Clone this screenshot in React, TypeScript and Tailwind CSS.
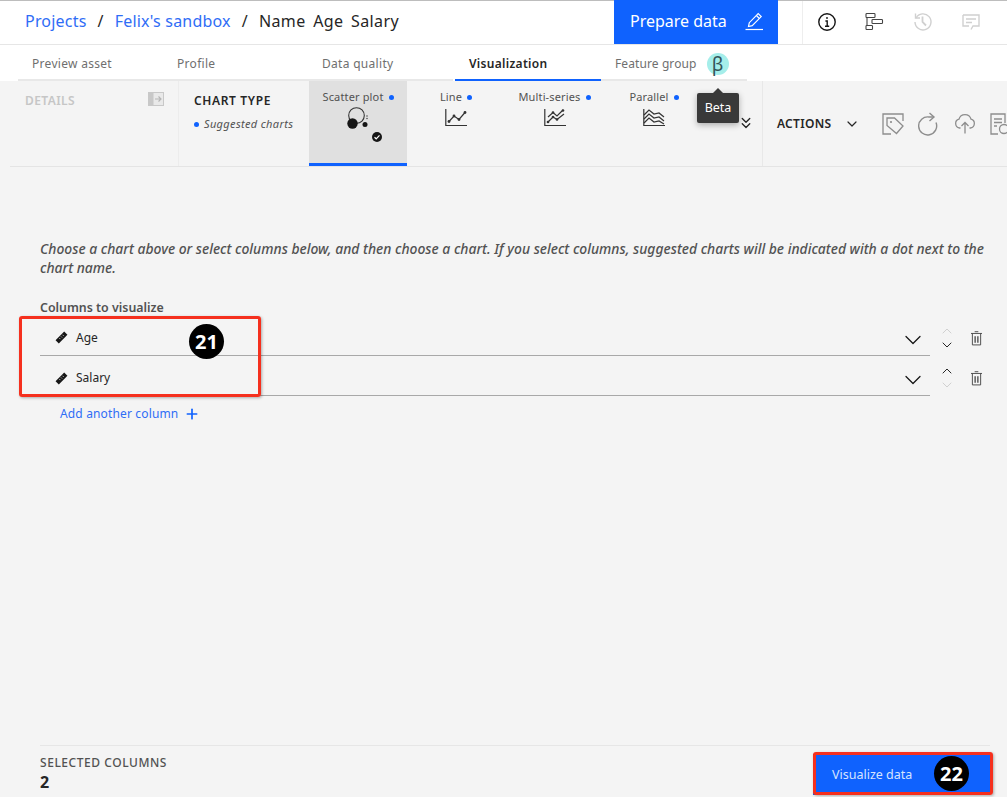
import React from 'react';
import {ChevronDown, ChevronUp, ChevronsDown, Plus} from 'lucide-react';

const font = {fontFamily: '"Noto Sans", "Open Sans", sans-serif'};

const tabs = ['Preview asset', 'Profile', 'Data quality'];

const InfoIcon = () => (
    <svg width="20" height="20" viewBox="0 0 20 20" fill="none" stroke="#161616" strokeWidth="1.4">
        <circle cx="10" cy="10" r="8.2"/>
        <path d="M8 14.2h4.2M10.2 14V9H8.4"/>
        <circle cx="10" cy="6" r=".9" fill="#161616" stroke="none"/>
    </svg>
);

const GanttIcon = () => (
    <svg width="20" height="20" viewBox="0 0 20 20" fill="none" stroke="#444" strokeWidth="1.1">
        <rect x="1" y="1.5" width="9" height="4" rx=".8"/>
        <rect x="7" y="7.5" width="10.5" height="4" rx=".8"/>
        <rect x="1" y="13.5" width="6.5" height="4" rx=".8"/>
        <path d="M2 5.5v8"/>
    </svg>
);

const HistoryIcon = () => (
    <svg width="20" height="20" viewBox="0 0 20 20" fill="none" stroke="#d0d0d0" strokeWidth="1.4">
        <path d="M2.5 1.5V6H7"/>
        <path d="M3 6a8 8 0 1 1-1 4"/>
        <path d="M9.5 4.5V10l3.5 3.5" strokeWidth="1.8"/>
    </svg>
);

const CommentIcon = () => (
    <svg width="20" height="20" viewBox="0 0 20 20" fill="none" stroke="#d0d0d0" strokeWidth="1.4">
        <path d="M2 3h16v11h-6l-2 3.5M8 14H2V3"/>
        <path d="M5 7h10M5 10.5h6"/>
    </svg>
);

const PencilIcon = () => (
    <svg width="20" height="20" viewBox="0 0 20 20" fill="none" stroke="white" strokeWidth="1.2">
        <path d="M1.5 18.5H19"/>
        <path d="M4.5 15.5l.8-3.8 8.900-9.100 3 3-9 9.100z"/>
        <path d="M12.4 4.5l3 3"/>
    </svg>
);

const SidePanelIcon = () => (
    <svg width="16" height="14" viewBox="0 0 16 14" fill="none">
        <rect x=".5" y=".5" width="15" height="13" fill="#e9e9e9" stroke="#c8c8c8"/>
        <rect x=".5" y=".5" width="5" height="13" fill="#c8c8c8"/>
        <path d="M7 7h6M10.5 4.5L13 7l-2.500 2.500" stroke="#b5b5b5" strokeWidth="1.2"/>
    </svg>
);

const ScatterIcon = () => (
    <svg width="24" height="26" viewBox="0 0 24 26" fill="none">
        <circle cx="10.5" cy="8.5" r="7.8" stroke="#333" strokeWidth="1.1"/>
        <circle cx="6.5" cy="16.5" r="5.2" fill="#161616"/>
        <circle cx="19" cy="17.5" r="2.5" fill="#161616"/>
        <circle cx="21" cy="9" r=".7" fill="#333"/>
        <circle cx="21" cy="11.5" r=".7" fill="#333"/>
    </svg>
);

const LineIcon = () => (
    <svg width="22" height="18" viewBox="0 0 22 18" fill="none" stroke="#333" strokeWidth="1.2">
        <path d="M.8 0v16.5H22"/>
        <path d="M4 12.5L9 7l5 3.500 6-7"/>
        <g fill="#333" stroke="none">
            <circle cx="4" cy="12.5" r="1.4"/>
            <circle cx="9" cy="7" r="1.4"/>
            <circle cx="14" cy="10.5" r="1.4"/>
            <circle cx="20" cy="3.5" r="1.4"/>
        </g>
    </svg>
);

const MultiSeriesIcon = () => (
    <svg width="22" height="18" viewBox="0 0 22 18" fill="none" stroke="#333" strokeWidth="1.2">
        <path d="M.8 0v16.5H22"/>
        <path d="M4 8l5-4.500 4 3.500 6-6"/>
        <path d="M4 13l5-5 4 2.500L20 5"/>
        <g fill="#333" stroke="none">
            <circle cx="4" cy="13" r="1.3"/>
            <circle cx="9" cy="8" r="1.3"/>
            <circle cx="13" cy="10.5" r="1.3"/>
            <circle cx="9" cy="3.5" r="1.3"/>
            <circle cx="19" cy="1.5" r="1.3"/>
        </g>
    </svg>
);

const ParallelIcon = () => (
    <svg width="22" height="18" viewBox="0 0 22 18" fill="none" stroke="#333" strokeWidth="1.2">
        <path d="M.8 0v16.5H22"/>
        <path d="M1 6l5-5 5 4 5-1 5 4"/>
        <path d="M1 10l5-5 5 4 5-1 5 4"/>
        <path d="M1 14l5-5 5 4 5-1 5 3"/>
    </svg>
);

const CheckBadge = () => (
    <svg width="10" height="10" viewBox="0 0 10 10">
        <circle cx="5" cy="5" r="5" fill="#161616"/>
        <path d="M2.5 5.2l1.700 1.600 3.300-3.400" fill="none" stroke="white" strokeWidth="1.2"/>
    </svg>
);

const TagIcon = () => (
    <svg width="22" height="22" viewBox="0 0 22 22" fill="none" stroke="#8d8d8d" strokeWidth="1.3">
        <path d="M9 21H1V1h20v7"/>
        <path d="M5 5h7.5l8.500 8-6.500 7.500L5 12.500z" fill="#f4f4f4"/>
        <circle cx="9" cy="9" r="1.1" fill="#8d8d8d" stroke="none"/>
    </svg>
);

const RefreshIcon = () => (
    <svg width="22" height="24" viewBox="0 0 22 24" fill="none" stroke="#8d8d8d" strokeWidth="1.4">
        <path d="M18 10.5A9 9 0 1 1 11 5h5"/>
        <path d="M11.5 1L16 5l-4.500 4"/>
    </svg>
);

const UploadIcon = () => (
    <svg width="22" height="22" viewBox="0 0 22 22" fill="none" stroke="#8d8d8d" strokeWidth="1.3">
        <path d="M6.5 15h-1A4.500 4.500 0 0 1 5 6.200a6.200 6.200 0 0 1 12 0 4.500 4.500 0 0 1-.5 8.800h-1"/>
        <path d="M11 20.5v-11M7.500 13L11 9.500l3.500 3.500"/>
    </svg>
);

const ReportIcon = () => (
    <svg width="20" height="22" viewBox="0 0 20 22" fill="none" stroke="#8d8d8d" strokeWidth="1.3">
        <path d="M8 21H1V1h14v9"/>
        <path d="M4 6h8M4 9.500h8M4 13h3"/>
        <circle cx="14" cy="16" r="4.5"/>
    </svg>
);

const RulerIcon = () => (
    <svg width="13" height="13" viewBox="0 0 12 12">
        <path d="M8.5 .5l3 3-8 8-3-3z" fill="#161616"/>
        <path d="M7 3.500l1 1M5.500 5l1 1M4 6.500l1 1" stroke="#f4f4f4" strokeWidth=".7"/>
    </svg>
);

const TrashIcon = () => (
    <svg width="11" height="15" viewBox="0 0 12 16" fill="none" stroke="#444" strokeWidth="1">
        <path d="M0 2.500h12M4 .6h4"/>
        <path d="M1.500 2.500V15h9V2.500"/>
        <path d="M4.500 5.500v7M7.500 5.500v7" strokeWidth="1.4"/>
    </svg>
);

const ChartOption = ({label, selected, widthClass, icon}: {
    label: string;
    selected?: boolean;
    widthClass: string;
    icon: React.ReactNode;
}) => (
    <div className={`${widthClass} flex-none flex flex-col items-center pt-[9px] ${selected ? 'bg-[#e0e0e0] border-b-[3px] border-[#0f62fe]' : ''}`}>
        <div className="flex items-center gap-[5px] text-[11px] leading-[14px] tracking-[.15px] text-[#525252]">
            {label}
            <span className="w-[5px] h-[5px] rounded-full bg-[#0f62fe]"/>
        </div>
        <div className={selected ? 'mt-[3px]' : 'mt-[5px]'}>{icon}</div>
    </div>
);

const ColumnRow = ({name, upEnabled, downEnabled, rowClass}: {
    name: string;
    upEnabled: boolean;
    downEnabled: boolean;
    rowClass: string;
}) => (
    <div className={`flex items-center ${rowClass}`}>
        <div className="w-[890px] h-full flex items-center border-b border-[#a8a8a8] pl-[15px] pr-[3px]">
            <RulerIcon/>
            <span className="ml-[8px] text-[12px] text-[#262626]">{name}</span>
            <ChevronDown className="ml-auto mt-[4px]" size={28} color="#161616" strokeWidth={1.1}/>
        </div>
        <div className="ml-[9px] flex flex-col items-center -mt-[1px]">
            <ChevronUp size={16} color={upEnabled ? '#262626' : '#d0d0d0'} strokeWidth={1.5}/>
            <ChevronDown size={16} className="-mt-[2px]" color={downEnabled ? '#262626' : '#d0d0d0'} strokeWidth={1.5}/>
        </div>
        <div className="ml-[16px]"><TrashIcon/></div>
    </div>
);

const App = () => {
    return (
        <div className="relative w-[1007px] h-[797px] overflow-hidden flex flex-col bg-[#f4f4f4]" style={font}>
            {/* top bar */}
            <header className="flex-none h-[45px] flex items-stretch bg-white border-t border-b border-t-[#bdbdbd] border-b-[#e6e6e6]">
                <div className="w-[614px] flex items-center pl-[25px] pb-[3px] gap-[11px] text-[16px] tracking-[.2px] text-[#262626] whitespace-nowrap">
                    <span className="text-[#2f6df6]">Projects</span>
                    <span>/</span>
                    <span className="text-[#2f6df6]">Felix's sandbox</span>
                    <span>/</span>
                    <span className="tracking-[.4px] [word-spacing:3px]">Name Age Salary</span>
                </div>
                <div className="w-[164px] flex items-center justify-between pl-[16px] pr-[14px] pb-[2px] bg-[#0f62fe] text-white text-[16px] -mt-px">
                    Prepare data
                    <PencilIcon/>
                </div>
                <div className="ml-[24px] flex-1 flex items-center pl-[14px] pb-[1px] gap-[28px] border-l border-[#eeeeee]">
                    <InfoIcon/>
                    <GanttIcon/>
                    <HistoryIcon/>
                    <CommentIcon/>
                </div>
            </header>

            {/* tabs */}
            <nav className="flex-none h-[36px] flex items-stretch bg-white pl-[18px] text-[12px] tracking-[.3px] text-[#6f6f6f]">
                {tabs.map((tab) => (
                    <div key={tab} className="w-[145px] flex items-center pl-[14px] pt-[4px] border-b-2 border-[#e8e8e8]">{tab}</div>
                ))}
                <div className="w-[146px] ml-[2px] flex items-center pl-[14px] pt-[4px] border-b-2 border-[#0f62fe] font-semibold text-[#262626]">Visualization</div>
                <div className="w-[146px] flex items-center pl-[14px] pt-[4px] border-b-2 border-[#e8e8e8] tracking-[.1px]">
                    Feature group
                    <span className="ml-[10px] w-[22px] h-[22px] rounded-full bg-[#a5eeea] flex items-center justify-center text-[19px] text-[#33555a]">β</span>
                </div>
            </nav>

            {/* toolbar */}
            <div className="flex-none h-[85px] flex items-stretch">
                <div className="w-[179px] flex-none flex items-start justify-between pl-[25px] pr-[14px] pt-[11px] border-r border-[#ececec]">
                    <span className="text-[12px] font-semibold text-[#c6c6c6] tracking-[.4px]">DETAILS</span>
                    <SidePanelIcon/>
                </div>
                <div className="w-[130px] flex-none pl-[15px] pt-[11px]">
                    <div className="text-[12px] font-semibold text-[#262626] tracking-[.65px]">CHART TYPE</div>
                    <div className="mt-[6px] flex items-center gap-[5px] text-[11px] tracking-[.35px] italic text-[#525252] whitespace-nowrap">
                        <span className="w-[5px] h-[5px] rounded-full bg-[#0f62fe]"/>
                        Suggested charts
                    </div>
                </div>
                <ChartOption label="Scatter plot" selected widthClass="w-[98px]" icon={
                    <div className="relative w-[24px] h-[40px]">
                        <ScatterIcon/>
                        <div className="absolute left-[26px] top-[25px]"><CheckBadge/></div>
                    </div>
                }/>
                <ChartOption label="Line" widthClass="w-[98px]" icon={<LineIcon/>}/>
                <ChartOption label="Multi-series" widthClass="w-[99px]" icon={<MultiSeriesIcon/>}/>
                <ChartOption label="Parallel" widthClass="w-[100px]" icon={<ParallelIcon/>}/>
                <div className="w-[58px] flex-none flex items-start justify-end pt-[33px] pr-[7px]">
                    <ChevronsDown size={18} color="#262626" strokeWidth={1.8}/>
                </div>
                <div className="flex-1 min-w-0 overflow-hidden flex items-start pl-[14px] pt-[34px] border-l border-[#e8e8e8] whitespace-nowrap">
                    <span className="text-[12px] font-semibold text-[#262626] tracking-[.3px]">ACTIONS</span>
                    <ChevronDown className="ml-[13px] mt-[1px] flex-none" size={16} color="#262626" strokeWidth={1.8}/>
                    <div className="ml-[22px] -mt-[3px] flex items-center gap-[14px] flex-none">
                        <TagIcon/>
                        <RefreshIcon/>
                        <UploadIcon/>
                        <ReportIcon/>
                    </div>
                </div>
            </div>

            {/* main */}
            <main className="flex-1 flex flex-col ml-[10px] pl-[30px] border-t border-[#e4e4e4]">
                <p className="mt-[72px] w-[952px] text-[13.9px] leading-[19px] italic font-medium text-[#525252]">
                    Choose a chart above or select columns below, and then choose a chart. If you select columns, suggested charts will be indicated with a dot next to the chart name.
                </p>
                <div className="mt-[23px] text-[12.4px] leading-[16px] font-semibold text-[#525252]">Columns to visualize</div>
                <div className="mt-[4px]">
                    <ColumnRow name="Age" upEnabled={false} downEnabled rowClass="h-[36px]"/>
                    <ColumnRow name="Salary" upEnabled downEnabled={false} rowClass="h-[40px] pt-[5px]"/>
                </div>
                <div className="mt-[9px] ml-[20px] flex items-center gap-[6px] text-[12px] tracking-[.15px] text-[#2f6df6]">
                    Add another column
                    <Plus size={16} color="#0f62fe" strokeWidth={2.5}/>
                </div>
                <footer className="mt-auto w-[950px] h-[52px] flex items-start justify-between border-t border-[#e6e6e6]">
                    <div className="pt-[10px]">
                        <div className="text-[12px] leading-[14px] font-medium text-[#525252] tracking-[.55px]">SELECTED COLUMNS</div>
                        <div className="mt-[2px] text-[16px] leading-[20px] font-bold text-[#262626]">2</div>
                    </div>
                    <button className="mt-[8px] w-[177px] h-[41px] flex items-center pl-[19px] pt-[1px] bg-[#0f62fe] text-[12.5px] text-[#d6e4ff] text-left">
                        Visualize data
                    </button>
                </footer>
            </main>

            {/* tutorial annotations and tooltip lie over the page */}
            <div className="absolute left-[19px] top-[316px] w-[242px] h-[81px] border-[3px] border-[#f5301e] rounded-[3px] shadow-[1px_1px_3px_rgba(0,0,0,.3)]"/>
            <div className="absolute left-[189px] top-[324px] w-[35px] h-[35px] rounded-full bg-black text-white flex items-center justify-center text-[20px] font-bold">21</div>
            <div className="absolute left-[813px] top-[752px] w-[180px] h-[43px] border-[3px] border-[#f5301e] rounded-[3px] shadow-[1px_1px_3px_rgba(0,0,0,.3)]"/>
            <div className="absolute left-[934px] top-[756px] w-[35px] h-[35px] rounded-full bg-black text-white flex items-center justify-center text-[20px] font-bold">22</div>
            <div className="absolute left-[697px] top-[93px] w-[42px] h-[30px] bg-[#393939] rounded-[2px] text-white text-[12.5px] flex items-center justify-center shadow-[0_2px_6px_rgba(0,0,0,.3)]">
                <span className="absolute -top-[5px] left-[16px] w-0 h-0 border-x-[5px] border-x-transparent border-b-[5px] border-b-[#393939]"/>
                Beta
            </div>
        </div>
    );
};

export default App;
